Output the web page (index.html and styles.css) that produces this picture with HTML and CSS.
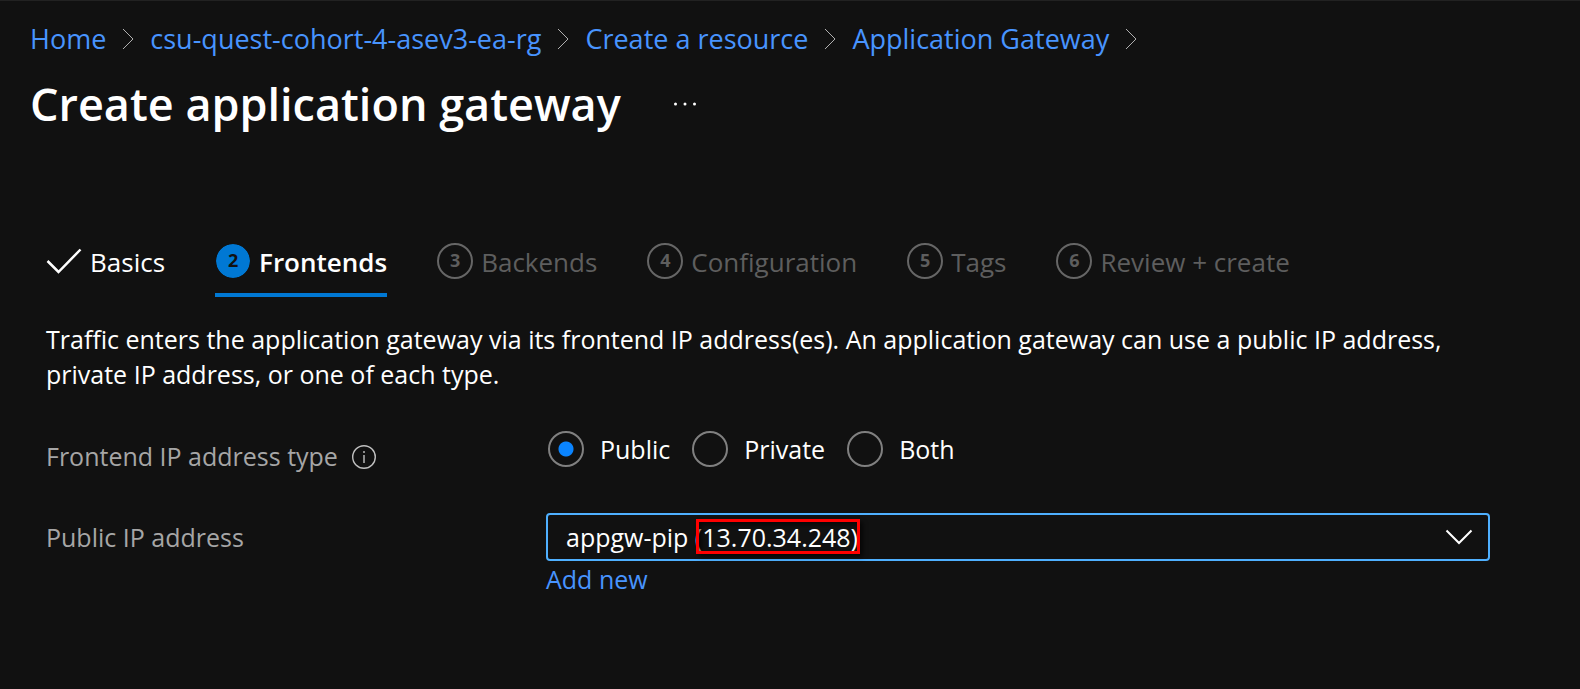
FILE: index.html
```html
<!DOCTYPE html>
<html lang="en">
<head>
<meta charset="utf-8">
<meta name="viewport" content="width=device-width, initial-scale=1">
<title>Create application gateway</title>
<link rel="stylesheet" href="styles.css">
</head>
<body>
<header class="header">
  <nav class="breadcrumb" aria-label="Breadcrumb">
    <a href="#">Home</a>
    <svg class="crumb-sep" viewBox="0 0 12 22" aria-hidden="true"><path d="M1 1l10 10L1 21"/></svg>
    <a href="#">csu-quest-cohort-4-asev3-ea-rg</a>
    <svg class="crumb-sep" viewBox="0 0 12 22" aria-hidden="true"><path d="M1 1l10 10L1 21"/></svg>
    <a href="#">Create a resource</a>
    <svg class="crumb-sep" viewBox="0 0 12 22" aria-hidden="true"><path d="M1 1l10 10L1 21"/></svg>
    <a href="#">Application Gateway</a>
    <svg class="crumb-sep" viewBox="0 0 12 22" aria-hidden="true"><path d="M1 1l10 10L1 21"/></svg>
  </nav>
  <div class="title-row">
    <h1 class="title">Create application gateway</h1>
    <button class="more" type="button" aria-label="More actions">
      <svg viewBox="0 0 24 6" aria-hidden="true"><circle cx="2.500" cy="3" r="1.500"/><circle cx="12" cy="3" r="1.500"/><circle cx="21.500" cy="3" r="1.500"/></svg>
    </button>
  </div>
</header>
<main class="content">
  <nav class="tabs" aria-label="Wizard steps">
    <button class="tab tab-done" type="button">
      <svg class="check" viewBox="0 0 36 26" aria-hidden="true"><path d="M1.500 13L12.500 24L34.500 1.500"/></svg>
      <span>Basics</span>
    </button>
    <button class="tab tab-active" type="button" aria-current="step"><span class="step">2</span><span>Frontends</span></button>
    <button class="tab" type="button"><span class="step">3</span><span>Backends</span></button>
    <button class="tab" type="button"><span class="step">4</span><span>Configuration</span></button>
    <button class="tab" type="button"><span class="step">5</span><span>Tags</span></button>
    <button class="tab" type="button"><span class="step">6</span><span>Review + create</span></button>
  </nav>
  <p class="intro">Traffic enters the application gateway via its frontend IP address(es). An application gateway can use a public IP address, private IP address, or one of each type.</p>
  <form class="form">
    <div class="label" id="type-label">
      <span>Frontend IP address type</span>
      <svg class="info" viewBox="0 0 24 24" aria-hidden="true"><circle cx="12" cy="12" r="11.300"/><path d="M12 10v8M12 6v2"/></svg>
    </div>
    <div class="radios" role="radiogroup" aria-labelledby="type-label">
      <label class="radio"><input type="radio" name="type" checked><span>Public</span></label>
      <label class="radio"><input type="radio" name="type"><span>Private</span></label>
      <label class="radio"><input type="radio" name="type"><span>Both</span></label>
    </div>
    <label class="label label-ip" for="ip">Public IP address</label>
    <div class="field">
      <div class="select-box">
        <select id="ip" class="select"><option>appgw-pip (13.70.34.248)</option></select>
        <svg class="caret" viewBox="0 0 28 16" aria-hidden="true"><path d="M1.500 1.500L14 14L26.500 1.500"/></svg>
        <span class="highlight"></span>
      </div>
      <a class="add" href="#">Add new</a>
    </div>
  </form>
</main>
</body>
</html>
```
FILE: styles.css
```css
* { box-sizing: border-box; }
body {
  margin: 0;
  min-height: 100vh;
  background: #111;
  border-top: 1px solid #222;
  color: #fff;
  font-family: "Open Sans", "Noto Sans", sans-serif;
  font-size: 25px;
  line-height: 35px;
}
a { color: #4894fe; text-decoration: none; }
button {
  padding: 0;
  border: 0;
  background: none;
  color: inherit;
  font: inherit;
}
svg { flex: none; fill: none; stroke: currentColor; }
.header { padding: 20px 30px 0; }
.breadcrumb {
  display: flex;
  align-items: center;
  gap: 16px;
  font-size: 27px;
  line-height: 36px;
}
.crumb-sep { width: 12px; height: 22px; color: #b0b0b0; }
.title-row { display: flex; align-items: center; gap: 52px; margin-top: 15px; }
.title { margin: 0; font-size: 45px; font-weight: 600; line-height: 64px; }
.more svg { display: block; width: 24px; height: 6px; fill: #fff; stroke: none; }
.content { padding: 0 90px 0 46px; }
.tabs { display: flex; gap: 50px; margin-top: 102px; }
.tab {
  display: flex;
  align-items: center;
  gap: 8px;
  height: 59px;
  padding-bottom: 6px;
  border-bottom: 4px solid transparent;
  color: #5e5e5e;
  font-size: 26px;
}
.tab-done { color: #fff; }
.tab-active { border-color: #0078d4; color: #fff; font-weight: 600; }
.check { width: 36px; height: 26px; margin-bottom: 4px; stroke-width: 2.500; }
.step {
  display: grid;
  place-items: center;
  align-content: start;
  width: 36px;
  height: 36px;
  margin-bottom: 4px;
  border: 2px solid #666;
  border-radius: 50%;
  font-size: 18px;
  font-weight: 700;
  line-height: 31px;
}
.tab-active .step { border-width: 1px; border-color: #111; background: #0078d4; background-clip: padding-box; color: #111; line-height: 33px; }
.intro { margin: 25px 0 0; }
.form {
  display: grid;
  grid-template-columns: 500px 1fr;
  align-items: start;
  margin-top: 39px;
}
.label { display: flex; align-items: center; gap: 14px; margin-top: 8px; color: #a6a6a6; }
.info { width: 24px; height: 24px; stroke: #c0c0c0; stroke-width: 1.400; }
.radios { display: flex; gap: 22px; padding-left: 2px; }
.radio { display: flex; align-items: center; gap: 16px; }
.radio input {
  appearance: none;
  width: 36px;
  height: 36px;
  margin: 0;
  border: 2px solid #808080;
  border-radius: 50%;
}
.radio input:checked { background: radial-gradient(circle, #0a84ff 7px, transparent 8px); }
.label-ip { margin-top: 46px; }
.field { margin-top: 39px; }
.select-box { position: relative; }
.select {
  appearance: none;
  display: block;
  width: 100%;
  height: 48px;
  padding: 0 60px 0 18px;
  border: 2px solid #4fb0ff;
  border-radius: 4px;
  background: #111;
  color: #fff;
  font: inherit;
}
.caret { position: absolute; top: 16px; right: 17px; width: 28px; height: 16px; stroke-width: 2; pointer-events: none; }
.highlight {
  position: absolute;
  top: 6px;
  left: 150px;
  width: 164px;
  height: 35px;
  border: 3px solid #f00;
  box-shadow: 3px 3px 4px #0009, inset 3px 3px 4px #0009;
  pointer-events: none;
}
.add { display: inline-block; margin-top: 1px; }
```
